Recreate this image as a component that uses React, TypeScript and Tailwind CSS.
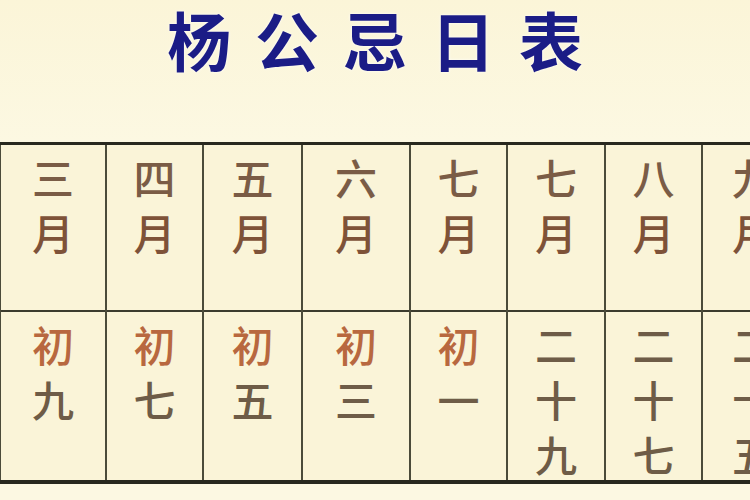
import React from "react";

type Col = { w: string; top: string[]; bottom: string[]; last?: boolean };

const cols: Col[] = [
  { w: "w-[107px]", top: ["三", "月"], bottom: ["初", "九"] },
  { w: "w-[97px]", top: ["四", "月"], bottom: ["初", "七"] },
  { w: "w-[99px]", top: ["五", "月"], bottom: ["初", "五"] },
  { w: "w-[108px]", top: ["六", "月"], bottom: ["初", "三"] },
  { w: "w-[97px]", top: ["七", "月"], bottom: ["初", "一"] },
  { w: "w-[98px]", top: ["七", "月"], bottom: ["二", "十", "九"] },
  { w: "w-[97px]", top: ["八", "月"], bottom: ["二", "十", "七"] },
  { w: "w-[100px]", top: ["九", "月"], bottom: ["二", "十", "五"], last: true },
];

function charColor(c: string, i: number, isTop: boolean) {
  if (c === "初") return "text-[#b8683f]";
  if (isTop && i === 1) return "text-[#7e5238]";
  if (isTop) return "text-[#7a5c46]";
  return "text-[#6e5c47]";
}

function Cell({ chars, isTop }: { chars: string[]; isTop: boolean }) {
  return (
    <div className="flex flex-col items-center pt-[4px]">
      {chars.map((c, i) => (
        <span
          key={i}
          className={`block text-[42px] leading-[55px] font-medium ${charColor(c, i, isTop)}`}
        >
          {c}
        </span>
      ))}
    </div>
  );
}

export default function App() {
  const title = ["杨", "公", "忌", "日", "表"];
  return (
    <div
      className="w-[750px] h-[500px] overflow-hidden bg-[#fbf6da] flex flex-col"
      style={{ fontFamily: '"Noto Sans CJK SC", "Noto Sans", sans-serif' }}
    >
      <div className="h-[142px] shrink-0 bg-gradient-to-b from-[#fbf5d8] to-[#fcf8e2] flex justify-center">
        <h1 className="flex gap-[24px] text-[64px] leading-[76px] font-bold text-[#1b1c86] [text-shadow:0_0_3px_#ffffff]">
          {title.map((t) => (
            <span key={t}>{t}</span>
          ))}
        </h1>
      </div>
      <div className="flex flex-row border-t-[3px] border-b-[4px] border-[#28281e] w-max shrink-0">
        {cols.map((col, idx) => (
          <div
            key={idx}
            className={`${col.w} shrink-0 flex flex-col ${col.last ? "" : "border-r-[2px] border-[#4b4b3a]"} ${idx === 0 ? "border-l-[1px] border-l-[#4b4b3a]" : ""}`}
          >
            <div className="h-[167px] bg-[#faf4d8] border-b-[2px] border-[#3c3c2e]">
              <Cell chars={col.top} isTop />
            </div>
            <div className="h-[168px] bg-[#faf4d8]">
              <Cell chars={col.bottom} isTop={false} />
            </div>
          </div>
        ))}
      </div>
      <div className="flex-1 bg-[#fcf8e2]" />
    </div>
  );
}
